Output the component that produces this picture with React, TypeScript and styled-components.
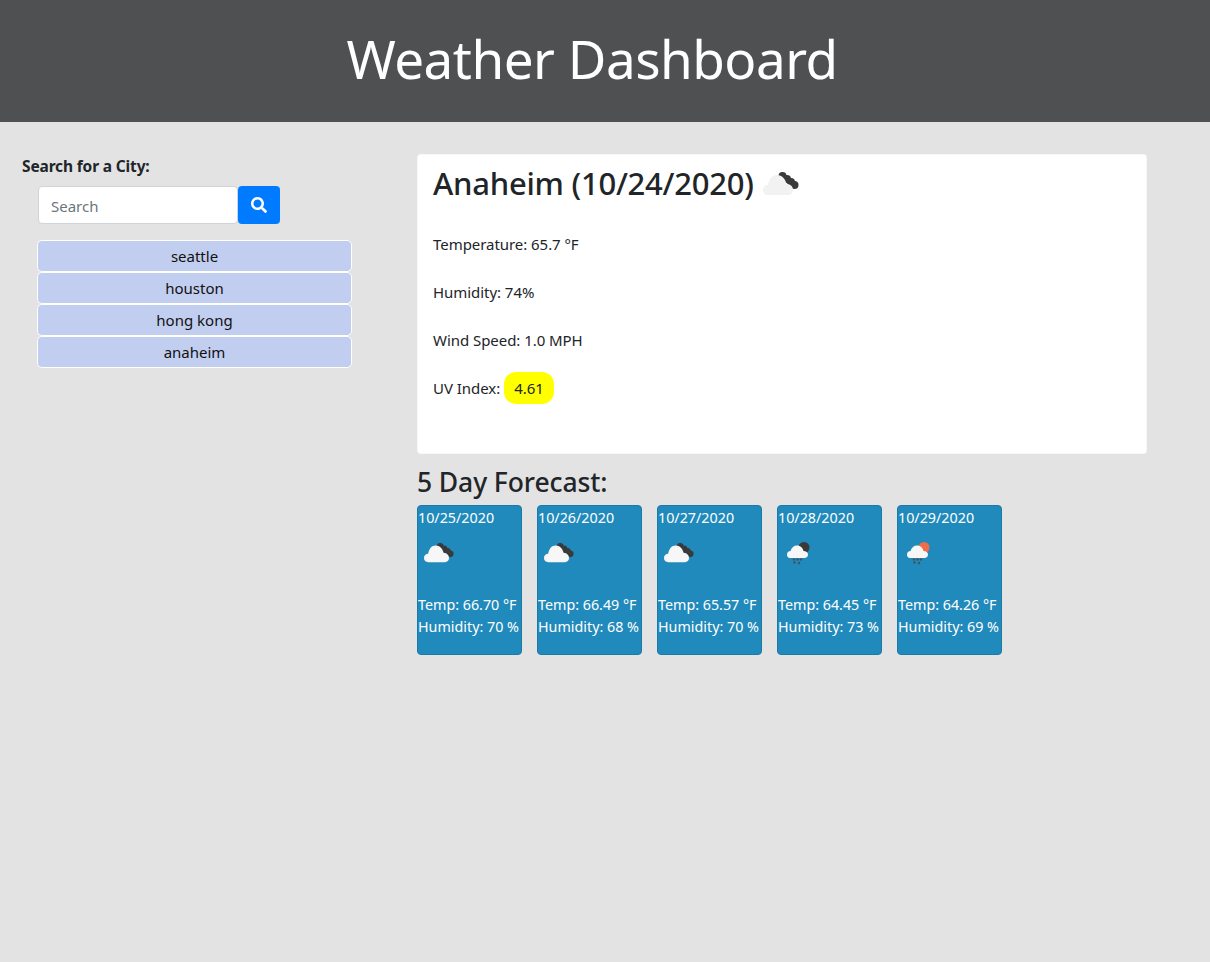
import styled, { createGlobalStyle } from "styled-components";
import { FaSearch } from "react-icons/fa";

const GlobalStyle = createGlobalStyle`
  html, body {
    margin: 0;
    padding: 0;
    background-color: #e3e3e3;
  }
  body {
    font-family: "Noto Sans", "Open Sans", sans-serif;
    font-size: 16px;
    line-height: 1.5;
    color: #212529;
    min-height: 962px;
  }
`;

const Header = styled.header`
  height: 122px;
  box-sizing: border-box;
  padding: 23px 26px 0 0;
  background-color: #4f5052;
  color: #fff;
  text-align: center;
`;

const Title = styled.h1`
  margin: 0;
  font-size: 53px;
  font-weight: 400;
  line-height: 72px;
  letter-spacing: -0.5px;
`;

const Layout = styled.main`
  display: grid;
  grid-template-columns: 395px 730px;
  column-gap: 22px;
  padding: 32px 0 0 0;
`;

const Sidebar = styled.aside`
  padding: 0 0 0 22px;
`;

const SearchLabel = styled.label`
  display: block;
  font-size: 15.5px;
  font-weight: 700;
  line-height: 24px;
  margin-bottom: 8px;
  letter-spacing: -0.15px;
`;

const SearchRow = styled.form`
  display: flex;
  margin: 0 0 16px 16px;
`;

const SearchInput = styled.input`
  width: 200px;
  height: 38px;
  box-sizing: border-box;
  padding: 7px 12px 5px;
  border: 1px solid #ced4da;
  border-radius: 4px;
  background-color: #fff;
  font-family: inherit;
  font-size: 15px;
  color: #495057;
  &::placeholder {
    color: #6c757d;
    opacity: 1;
  }
`;

const SearchButton = styled.button`
  width: 42px;
  height: 38px;
  display: flex;
  align-items: center;
  justify-content: center;
  border: none;
  border-radius: 4px;
  background-color: #007bff;
  color: #fff;
  padding: 0;
`;

const CityList = styled.div`
  display: flex;
  flex-direction: column;
  margin-left: 15px;
  width: 315px;
`;

const CityItem = styled.button`
  height: 32px;
  box-sizing: border-box;
  border: 1px solid #fff;
  border-radius: 5px;
  background-color: #c2cef0;
  font-family: inherit;
  font-size: 15px;
  line-height: 28px;
  color: #111;
  padding: 0;
  text-align: center;
`;

const Content = styled.section`
  display: flex;
  flex-direction: column;
`;

const CurrentCard = styled.div`
  height: 300px;
  box-sizing: border-box;
  padding: 7px 15px 0;
  background-color: #fff;
  border: 1px solid rgba(0, 0, 0, 0.03);
  border-radius: 4px;
`;

const CityHeading = styled.h2`
  display: flex;
  align-items: center;
  margin: 0 0 24px;
  font-size: 31px;
  font-weight: 550;
  line-height: 42px;
  letter-spacing: -0.25px;
`;

const StatLine = styled.p`
  display: flex;
  align-items: center;
  height: 32px;
  margin: 0 0 16px;
  font-size: 15px;
  line-height: 24px;
  letter-spacing: -0.05px;
`;

const UvBadge = styled.span`
  display: inline-block;
  width: 50px;
  height: 32px;
  margin-left: 4px;
  border-radius: 12px;
  background-color: #ffff00;
  text-align: center;
  line-height: 32px;
`;

const ForecastHeading = styled.h3`
  margin: 10px 0 0;
  font-size: 26.5px;
  font-weight: 550;
  line-height: 36px;
  letter-spacing: -0.1px;
`;

const ForecastRow = styled.div`
  display: flex;
  gap: 15px;
  margin-top: 5px;
`;

const ForecastCard = styled.article`
  width: 105px;
  height: 150px;
  box-sizing: border-box;
  border: 1px solid #1c7aa6;
  border-radius: 4px;
  background-color: #218abc;
  color: #fff;
  font-size: 14.3px;
  line-height: 22px;
  white-space: nowrap;
  overflow: hidden;
`;

const ForecastDate = styled.div`
  padding: 1px 0 0;
`;

const ForecastIcon = styled.div`
  height: 51px;
  padding: 14px 0 0 6px;
  box-sizing: content-box;
`;

const ForecastText = styled.div`
  padding-left: 0;
`;

const BigCloud = styled.svg`
  margin: 2px 0 0 9px;
`;

const SmallIcon = styled.svg`
  display: block;
  overflow: visible;
`;

type IconKind = "clouds" | "night-rain" | "day-rain";

const cloudPath =
  "M5 23 C2 23 0 21 0 18 C0 15 2 13 5 13 C6 7 9 3 14 3 C19 3 22.500 7 23.500 12 C27.500 12 30 14.500 30 18 C30 21 28 23 25 23 Z";

const CloudShape = ({ fill }: { fill: string }) => (
  <>
    <g fill="#3a3a3a">
      <circle cx="19.500" cy="4" r="4" />
      <circle cx="24" cy="7" r="4" />
      <circle cx="28" cy="10" r="4" />
      <circle cx="31.500" cy="13" r="4" />
    </g>
    <path d={cloudPath} fill={fill} />
  </>
);

const RainIcon = ({ sun }: { sun: string }) => (
  <SmallIcon width="30" height="20" viewBox="0 0 30 20">
    <circle cx="20" cy="4.500" r="5.500" fill={sun} />
    <path
      d="M6 15 C4 15 3 13.500 3 11.500 C3 9.500 4.500 8 6.500 8 C7.500 4.500 10 2.500 13 2.500 C16.500 2.500 19 5 19.500 8 C22 8 24 9.500 24 11.500 C24 13.500 22.500 15 20.500 15 Z"
      fill="#f7f7f7"
    />
    <g fill="#46525c">
      <circle cx="10" cy="16.500" r="1.200" />
      <circle cx="13.500" cy="16.500" r="1.200" />
      <circle cx="17" cy="16.500" r="1.200" />
      <circle cx="10.500" cy="19.500" r="1.200" />
      <circle cx="15" cy="20" r="1.200" />
    </g>
  </SmallIcon>
);

const WeatherIcon = ({ kind }: { kind: IconKind }) => {
  if (kind === "night-rain") return <RainIcon sun="#3a3a3a" />;
  if (kind === "day-rain") return <RainIcon sun="#ee6e49" />;
  return (
    <SmallIcon width="30" height="20" viewBox="0 0 36 24">
      <CloudShape fill="#f7f7f7" />
    </SmallIcon>
  );
};

const cities = ["seattle", "houston", "hong kong", "anaheim"];

const forecast: { date: string; temp: string; humidity: string; icon: IconKind }[] = [
  { date: "10/25/2020", temp: "66.70", humidity: "70", icon: "clouds" },
  { date: "10/26/2020", temp: "66.49", humidity: "68", icon: "clouds" },
  { date: "10/27/2020", temp: "65.57", humidity: "70", icon: "clouds" },
  { date: "10/28/2020", temp: "64.45", humidity: "73", icon: "night-rain" },
  { date: "10/29/2020", temp: "64.26", humidity: "69", icon: "day-rain" },
];

const App = () => {
  return (
    <>
      <GlobalStyle />
      <Header>
        <Title>Weather Dashboard</Title>
      </Header>
      <Layout>
        <Sidebar>
          <SearchLabel htmlFor="city">Search for a City:</SearchLabel>
          <SearchRow>
            <SearchInput id="city" placeholder="Search" />
            <SearchButton type="button" aria-label="Search">
              <FaSearch size={16} />
            </SearchButton>
          </SearchRow>
          <CityList>
            {cities.map((city) => (
              <CityItem key={city} type="button">
                {city}
              </CityItem>
            ))}
          </CityList>
        </Sidebar>
        <Content>
          <CurrentCard>
            <CityHeading>
              Anaheim (10/24/2020)
              <BigCloud width="36" height="24" viewBox="0 0 36 24">
                <CloudShape fill="#f2f2f2" />
              </BigCloud>
            </CityHeading>
            <StatLine>Temperature: 65.7 °F</StatLine>
            <StatLine>Humidity: 74%</StatLine>
            <StatLine>Wind Speed: 1.0 MPH</StatLine>
            <StatLine>
              UV Index: <UvBadge>4.61</UvBadge>
            </StatLine>
          </CurrentCard>
          <ForecastHeading>5 Day Forecast:</ForecastHeading>
          <ForecastRow>
            {forecast.map((day) => (
              <ForecastCard key={day.date}>
                <ForecastDate>{day.date}</ForecastDate>
                <ForecastIcon>
                  <WeatherIcon kind={day.icon} />
                </ForecastIcon>
                <ForecastText>Temp: {day.temp} °F</ForecastText>
                <ForecastText>Humidity: {day.humidity} %</ForecastText>
              </ForecastCard>
            ))}
          </ForecastRow>
        </Content>
      </Layout>
    </>
  );
};

export default App;
